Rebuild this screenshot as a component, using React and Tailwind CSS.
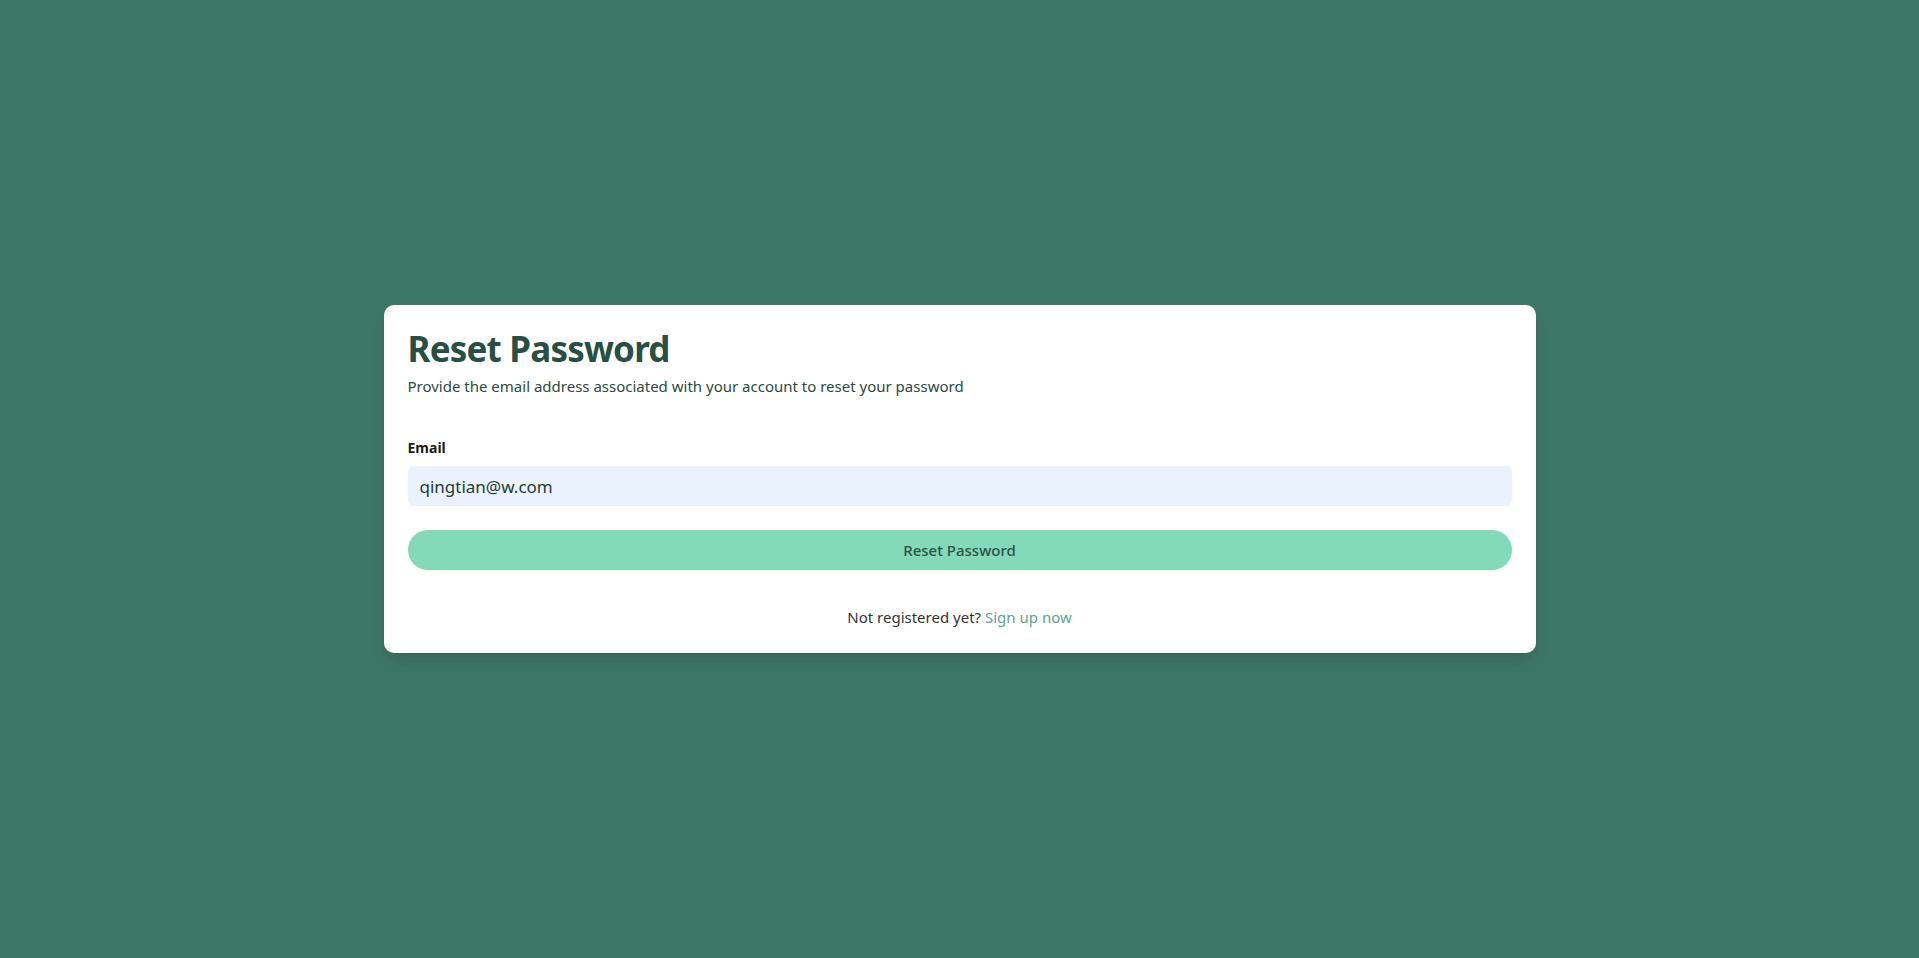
import { useState } from 'react';

const ResetPassword = () => {
  const [email, setEmail] = useState('qingtian@w.com');

  const handleSubmit = (e) => {
    e.preventDefault();
  };

  return (
    <div className="min-h-screen bg-[#3e7665] flex items-center justify-center font-['Noto_Sans',sans-serif]">
      <div className="w-[1152px] bg-white rounded-[10px] shadow-lg p-6">
        <h1 className="text-[35px] tracking-[-0.8px] font-bold text-[#284f43] leading-10">Reset Password</h1>
        <p className="mt-[5px] text-[15px] leading-6 text-[#2c4a41]">
          Provide the email address associated with your account to reset your password
        </p>
        <form onSubmit={handleSubmit} className="mt-[40px]">
          <label htmlFor="email" className="block text-sm leading-5 font-bold text-[#1c1c1c] mb-2">
            Email
          </label>
          <input
            id="email"
            type="email"
            value={email}
            onChange={(e) => setEmail(e.target.value)}
            className="w-full h-10 px-3 rounded-md bg-[#eaf2fd] text-[17px] text-[#1f3d35] focus:outline-none"
          />
          <button
            type="submit"
            className="mt-6 w-full h-10 rounded-full bg-[#85d9bb] text-[15px] font-medium text-[#2b5145]"
          >
            Reset Password
          </button>
        </form>
        <p className="mt-[35px] text-center text-[15px] leading-6 text-[#333]">
          Not registered yet? <a href="#" className="text-[#5aa592]">Sign up now</a>
        </p>
      </div>
    </div>
  );
};

export default ResetPassword;
